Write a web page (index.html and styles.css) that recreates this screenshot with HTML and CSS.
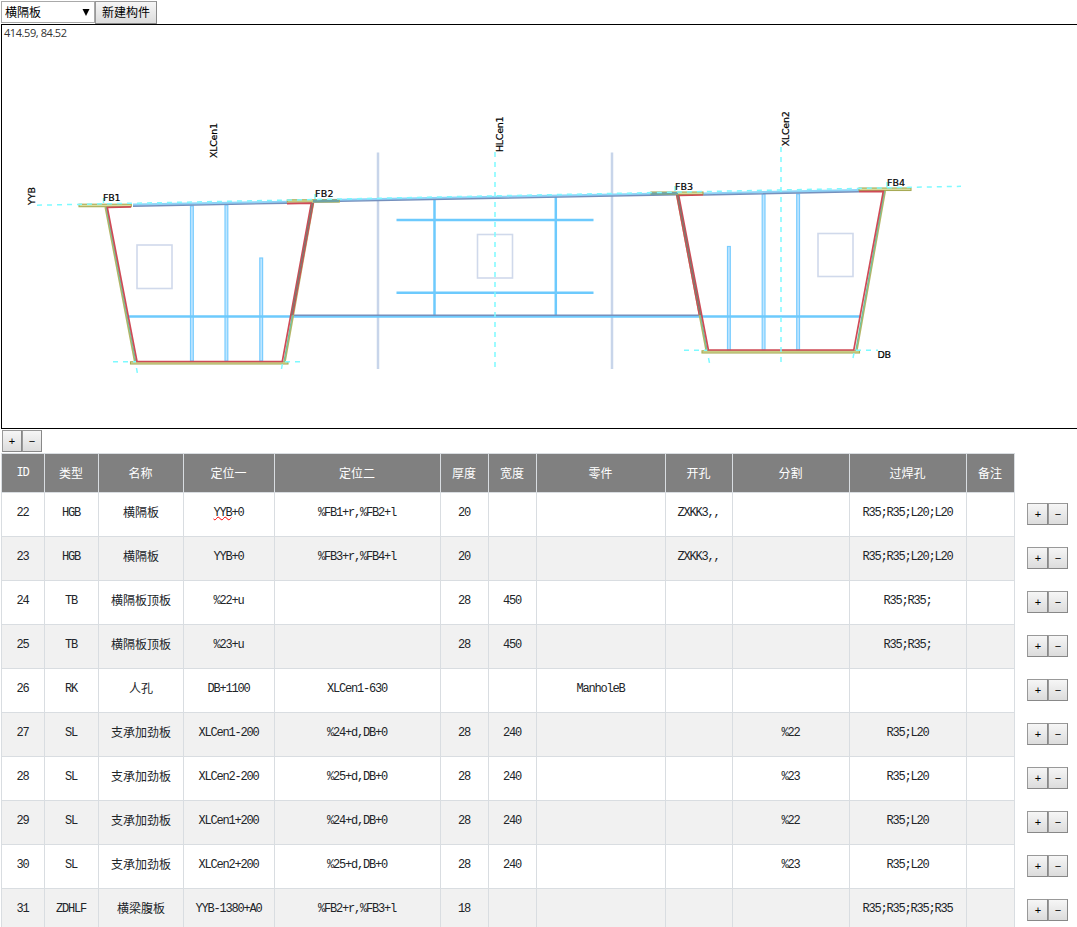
FILE: index.html
```
<!DOCTYPE html>
<html lang="zh">
<head>
<meta charset="utf-8">
<title>横隔板</title>
<link rel="stylesheet" href="styles.css">
</head>
<body>
<div class="toolbar">
  <div class="select"><span>横隔板</span><svg width="8" height="8" viewBox="0 0 8 8"><path d="M0.5 1h7L4 8z"/></svg></div>
  <button class="btn create">新建构件</button>
</div>
<div class="canvas">
<svg width="1076" height="403" viewBox="2 25 1076 403">
  <text class="coords" x="4" y="37" textLength="63">414.59, 84.52</text>
  <g class="hole">
    <rect x="137" y="245" width="35" height="43.5"/>
    <rect x="477.5" y="234.5" width="35" height="43.5"/>
    <rect x="818" y="233.5" width="35" height="43"/>
  </g>
  <path class="cut" d="M378 152.500V369M612 152.500V369"/>
  <g class="stiff">
    <rect x="190.500" y="206" width="2.800" height="155"/>
    <rect x="225" y="205" width="2.800" height="156"/>
    <rect x="259.800" y="258" width="2.800" height="103"/>
    <rect x="727.500" y="246.500" width="2.800" height="103.500"/>
    <rect x="762.200" y="194" width="2.800" height="156"/>
    <rect x="796.700" y="194" width="2.800" height="156"/>
  </g>
  <path class="rib" d="M434.500 199.500V316M555.800 197V316M396.500 220H593.500M396.500 292.800H593.500M128 316.500H861"/>
  <path class="sky" d="M133 204.700L287 201.900M313 200.500L678 193.400M703 193.600L859 190.200"/>
  <path class="navy" d="M133 206.200L287 203.300M313 201.900L678 194.800M703 195L859 191.800M291 315.300H701"/>
  <g class="plate">
    <rect x="79" y="204.200" width="52.300" height="2.500"/>
    <rect x="287.300" y="199.800" width="52" height="2.300"/>
    <rect x="651" y="192" width="52" height="2.500"/>
    <rect x="859" y="188" width="52" height="2.500"/>
    <rect x="130.500" y="361.800" width="157.500" height="2.200"/>
    <rect x="702" y="350.800" width="157.500" height="2.200"/>
  </g>
  <path class="cover" d="M313 201.200L339 200.700M651 193.800L678 193.300"/>
  <path class="olive" d="M105.300 207L134.700 361.500M313.400 203L285 361.500M676.700 195L706.200 350.500M885.200 191L856.800 350.500"/>
  <path class="teal" d="M106.300 207L135.800 361.500M312.500 203L284 361.500M677.700 195L707.200 350.500M884.400 191L855.800 350.500"/>
  <path class="red" d="M131 206.900L107.300 207.500L137 361.500H282.300L311.300 203.200L287 203.600M703 195L678.700 195.500L708.400 350H853.800L883.300 191.300L859 191.700"/>
  <path class="red outer" d="M313.400 203L292.800 315M676.600 195L699.200 315"/>
  <path class="shade" d="M312.400 203L291.700 315M677.700 195L700.500 315"/>
  <path class="axis" d="M37 205.200L961 186.300M495 152V368M781 147V362M113 361.800H136M285 361.800H305M684 350.300H707M856 350.300H878M136.500 368l1 6M281.500 369l1-6M708.500 358l1 5M853 358l1-5M103.500 203v-9M315 199v-9M675 191v-9M887 187v-9"/>
  <g class="label">
    <text x="103" y="201.300" textLength="17.500">FB1</text>
    <text x="315" y="197.200" textLength="18.500">FB2</text>
    <text x="675" y="190.200" textLength="18">FB3</text>
    <text x="887" y="186.200" textLength="18">FB4</text>
    <text x="877.500" y="358.200" textLength="13.500">DB</text>
    <text transform="translate(35 205) rotate(-90)" textLength="18">YYB</text>
    <text transform="translate(217 158) rotate(-90)" textLength="35">XLCen1</text>
    <text transform="translate(503.200 152) rotate(-90)" textLength="35.500">HLCen1</text>
    <text transform="translate(789 146.300) rotate(-90)" textLength="35">XLCen2</text>
  </g>
</svg>
</div>
<div class="pair top-pair"><button class="btn">+</button><button class="btn">−</button></div>
<div class="table">
  <div class="row head"><div class="latin">ID</div><div>类型</div><div>名称</div><div>定位一</div><div>定位二</div><div>厚度</div><div>宽度</div><div>零件</div><div>开孔</div><div>分割</div><div>过焊孔</div><div>备注</div></div>
  <div class="line"><div class="row"><div>22</div><div>HGB</div><div class="cn">横隔板</div><div><span class="typo">YYB</span>+0</div><div>%FB1+r,%FB2+l</div><div>20</div><div></div><div></div><div>ZXKK3,,</div><div></div><div>R35;R35;L20;L20</div><div></div></div><div class="pair"><button class="btn">+</button><button class="btn">−</button></div></div>
  <div class="line"><div class="row alt"><div>23</div><div>HGB</div><div class="cn">横隔板</div><div>YYB+0</div><div>%FB3+r,%FB4+l</div><div>20</div><div></div><div></div><div>ZXKK3,,</div><div></div><div>R35;R35;L20;L20</div><div></div></div><div class="pair"><button class="btn">+</button><button class="btn">−</button></div></div>
  <div class="line"><div class="row"><div>24</div><div>TB</div><div class="cn">横隔板顶板</div><div>%22+u</div><div></div><div>28</div><div>450</div><div></div><div></div><div></div><div>R35;R35;</div><div></div></div><div class="pair"><button class="btn">+</button><button class="btn">−</button></div></div>
  <div class="line"><div class="row alt"><div>25</div><div>TB</div><div class="cn">横隔板顶板</div><div>%23+u</div><div></div><div>28</div><div>450</div><div></div><div></div><div></div><div>R35;R35;</div><div></div></div><div class="pair"><button class="btn">+</button><button class="btn">−</button></div></div>
  <div class="line"><div class="row"><div>26</div><div>RK</div><div class="cn">人孔</div><div>DB+1100</div><div>XLCen1-630</div><div></div><div></div><div>ManholeB</div><div></div><div></div><div></div><div></div></div><div class="pair"><button class="btn">+</button><button class="btn">−</button></div></div>
  <div class="line"><div class="row alt"><div>27</div><div>SL</div><div class="cn">支承加劲板</div><div>XLCen1-200</div><div>%24+d,DB+0</div><div>28</div><div>240</div><div></div><div></div><div>%22</div><div>R35;L20</div><div></div></div><div class="pair"><button class="btn">+</button><button class="btn">−</button></div></div>
  <div class="line"><div class="row"><div>28</div><div>SL</div><div class="cn">支承加劲板</div><div>XLCen2-200</div><div>%25+d,DB+0</div><div>28</div><div>240</div><div></div><div></div><div>%23</div><div>R35;L20</div><div></div></div><div class="pair"><button class="btn">+</button><button class="btn">−</button></div></div>
  <div class="line"><div class="row alt"><div>29</div><div>SL</div><div class="cn">支承加劲板</div><div>XLCen1+200</div><div>%24+d,DB+0</div><div>28</div><div>240</div><div></div><div></div><div>%22</div><div>R35;L20</div><div></div></div><div class="pair"><button class="btn">+</button><button class="btn">−</button></div></div>
  <div class="line"><div class="row"><div>30</div><div>SL</div><div class="cn">支承加劲板</div><div>XLCen2+200</div><div>%25+d,DB+0</div><div>28</div><div>240</div><div></div><div></div><div>%23</div><div>R35;L20</div><div></div></div><div class="pair"><button class="btn">+</button><button class="btn">−</button></div></div>
  <div class="line"><div class="row alt"><div>31</div><div>ZDHLF</div><div class="cn">横梁腹板</div><div>YYB-1380+A0</div><div>%FB2+r,%FB3+l</div><div>18</div><div></div><div></div><div></div><div></div><div>R35;R35;R35;R35</div><div></div></div><div class="pair"><button class="btn">+</button><button class="btn">−</button></div></div>
</div>
</body>
</html>
```

FILE: styles.css
```
* { box-sizing: border-box; }
html, body { height: 927px; overflow: hidden; }
body { margin: 0; background: #fff; font: 12px "Noto Sans CJK SC", sans-serif; }

.toolbar { display: flex; height: 24px; padding: 1px 0 0 1px; }
.select {
  display: flex; align-items: center; justify-content: space-between;
  width: 94px; height: 22px; padding: 0 4px 0 3px;
  border: 1px solid #a9a9a9; background: #fff;
  line-height: 20px;
}
.btn {
  width: 20px; height: 22px; margin: 0; padding: 0;
  border: 1px solid #999; border-right-color: #888; border-bottom-color: #888;
  background: linear-gradient(#f6f6f6, #dcdcdc); color: #000;
  font: 11px/18px "Liberation Sans", "Noto Sans CJK SC", sans-serif;
}
.create { width: 62px; height: 23px; font-size: 12px; line-height: 20px; }

.canvas { height: 405px; width: 1078px; margin-left: 1px; border: 1px solid #000; }
.canvas svg { display: block; }
.canvas path, .canvas rect { fill: none; }
.coords { font: 11px "Open Sans", sans-serif; fill: #333; }
.hole { stroke: #d0d9eb; stroke-width: 1.6; }
.cut { stroke: #c8d5ea; stroke-width: 2.5; }
.stiff { stroke: #7bcdff; stroke-width: 1.2; }
.canvas .stiff rect { fill: #bfe6ff; }
.rib { stroke: #6dcafd; stroke-width: 2.5; }
.sky { stroke: #8fd3f7; stroke-width: 2.4; }
.navy { stroke: #7590bd; stroke-width: 1.4; }
.plate { stroke: #a7aa55; stroke-width: 1.1; }
.canvas .plate rect { fill: #d9dfa0; }
.cover { stroke: #6fa3a5; stroke-width: 2.6; }
.olive { stroke: #b5b566; stroke-width: 1.7; }
.teal { stroke: #6bc3a0; stroke-width: 1.3; }
.red { stroke: #cf4a56; stroke-width: 1.7; }
.outer { stroke-width: 1.3; }
.shade { stroke: #80756b; stroke-width: 1.4; }
.axis { stroke: #7dfaff; stroke-width: 1.5; stroke-dasharray: 5 5; }
.label { font: 9.500px "DejaVu Sans", sans-serif; fill: #000; stroke: #000; stroke-width: .2px; }

.pair { display: flex; }
.top-pair { height: 24px; padding: 1px 0 0 2px; }

.table { width: 1077px; padding-left: 1px; }
.line { display: flex; gap: 12px; }
.line .pair { padding-top: 10px; }
.line .pair .btn:first-child { width: 21px; padding-left: 1px; }
.row {
  display: grid; flex: none; width: 1014px; height: 44px;
  grid-template-columns: 43px 54px 85px 91px 166px 48px 48px 129px 67px 117px 117px 48px;
  border-left: 1px solid #d9dde1;
  font: 12px/40px "Liberation Mono", monospace; letter-spacing: -1.2px;
  color: #212529; text-align: center; white-space: nowrap;
}
.row > div { padding-right: 1px; border-right: 1px solid #d9dde1; border-bottom: 1px solid #d9dde1; }
.alt { background: #f1f1f1; }
.row .cn { padding-right: 0; font-family: "Noto Sans CJK SC", sans-serif; line-height: 38px; letter-spacing: 0; }
.head {
  height: 40px; grid-template-rows: 39px; border-top: 1px solid #d9dde1; background: #808080; color: #fff;
  font-family: "Noto Sans CJK SC", sans-serif; line-height: 38px; letter-spacing: 0;
}
.head .latin { font-family: "Liberation Mono", monospace; letter-spacing: -1.2px; }
.typo { text-decoration: underline wavy #f00 1px; text-underline-offset: 0; }
```
